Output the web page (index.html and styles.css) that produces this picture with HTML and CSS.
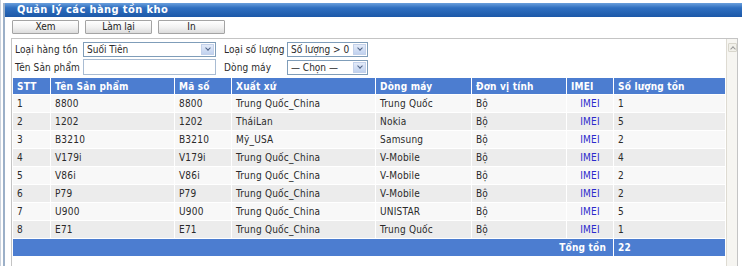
FILE: index.html
```html
<!DOCTYPE html>
<html lang="vi">
<head>
  <meta charset="UTF-8">
  <title>Quản lý các hàng tồn kho</title>
  <link rel="stylesheet" href="styles.css">
</head>
<body>

  <div class="frame">
    <div class="panel">
      <!-- Title bar -->
      <div class="panel-title">Quản lý các hàng tồn kho</div>

      <!-- Toolbar -->
      <div class="toolbar">
        <button class="btn">Xem</button>
        <button class="btn">Làm lại</button>
        <button class="btn">In</button>
      </div>

      <!-- Scroll box with filters and table -->
      <div class="scrollbox">
        <div class="scroll-content">
          <div class="filters">
            <label class="f-label">Loại hàng tồn</label>
            <div class="select wide"><span>Suối Tiên</span><i class="arrow"></i></div>
            <label class="f-label second">Loại số lượng</label>
            <div class="select narrow"><span>Số lượng &gt; 0</span><i class="arrow"></i></div>

            <label class="f-label">Tên Sản phẩm</label>
            <div class="textbox"></div>
            <label class="f-label second">Dòng máy</label>
            <div class="select narrow"><span>— Chọn —</span><i class="arrow"></i></div>
          </div>

          <table class="stock">
            <colgroup>
              <col style="width:37px">
              <col style="width:123px">
              <col style="width:56px">
              <col style="width:143px">
              <col style="width:95px">
              <col style="width:94px">
              <col style="width:46px">
              <col style="width:111px">
            </colgroup>
            <thead>
              <tr>
                <th>STT</th>
                <th>Tên Sản phẩm</th>
                <th>Mã số</th>
                <th>Xuất xứ</th>
                <th>Dòng máy</th>
                <th>Đơn vị tính</th>
                <th>IMEI</th>
                <th>Số lượng tồn</th>
              </tr>
            </thead>
            <tbody>
              <tr><td>1</td><td>8800</td><td>8800</td><td>Trung Quốc_China</td><td>Trung Quốc</td><td>Bộ</td><td class="c"><a href="#">IMEI</a></td><td>1</td></tr>
              <tr><td>2</td><td>1202</td><td>1202</td><td>TháiLan</td><td>Nokia</td><td>Bộ</td><td class="c"><a href="#">IMEI</a></td><td>5</td></tr>
              <tr><td>3</td><td>B3210</td><td>B3210</td><td>Mỹ_USA</td><td>Samsung</td><td>Bộ</td><td class="c"><a href="#">IMEI</a></td><td>2</td></tr>
              <tr><td>4</td><td>V179i</td><td>V179i</td><td>Trung Quốc_China</td><td>V-Mobile</td><td>Bộ</td><td class="c"><a href="#">IMEI</a></td><td>4</td></tr>
              <tr><td>5</td><td>V86i</td><td>V86i</td><td>Trung Quốc_China</td><td>V-Mobile</td><td>Bộ</td><td class="c"><a href="#">IMEI</a></td><td>2</td></tr>
              <tr><td>6</td><td>P79</td><td>P79</td><td>Trung Quốc_China</td><td>V-Mobile</td><td>Bộ</td><td class="c"><a href="#">IMEI</a></td><td>2</td></tr>
              <tr><td>7</td><td>U900</td><td>U900</td><td>Trung Quốc_China</td><td>UNISTAR</td><td>Bộ</td><td class="c"><a href="#">IMEI</a></td><td>5</td></tr>
              <tr><td>8</td><td>E71</td><td>E71</td><td>Trung Quốc_China</td><td>Trung Quốc</td><td>Bộ</td><td class="c"><a href="#">IMEI</a></td><td>1</td></tr>
            </tbody>
            <tfoot>
              <tr>
                <td colspan="7" class="total-label">Tổng tồn</td>
                <td class="total">22</td>
              </tr>
            </tfoot>
          </table>
        </div>

        <!-- Scrollbar -->
        <div class="scrollbar"><span class="scroll-up"></span></div>
      </div>
    </div>
  </div>

</body>
</html>
```

FILE: styles.css
```css
* {
  box-sizing: border-box;
  margin: 0;
  padding: 0;
}

body {
  font-family: "DejaVu Sans Condensed", "DejaVu Sans", sans-serif;
  font-stretch: condensed;
  font-size: 10px;
  color: #2a2a2a;
  background: #fff;
  overflow: hidden;
}

.frame {
  height: 266px;
  padding-top: 3px;
  border-left: 1px solid #c9d1dc;
}

.panel {
  height: 100%;
  margin-left: 2px;
  border-left: 2px solid #9cb0c8;
}

/* Title bar */
.panel-title {
  height: 14px;
  line-height: 14px;
  padding-left: 12px;
  color: #fff;
  font-weight: bold;
  font-size: 11px;
  letter-spacing: 0.4px;
  background: linear-gradient(to bottom, #6a9fdc 0%, #2f6fc0 35%, #1c58a8 100%);
}

/* Toolbar */
.toolbar {
  display: flex;
  gap: 6px;
  padding: 3px 0 0 7px;
}

.btn {
  width: 67px;
  height: 14px;
  font-family: inherit;
  font-stretch: condensed;
  font-size: 10px;
  line-height: 12px;
  color: #222;
  border: 1px solid #a4a4a4;
  border-radius: 1px;
  background: linear-gradient(to bottom, #ffffff 0%, #f1f1f1 55%, #dcdcdc 100%);
}

/* Scroll box */
.scrollbox {
  display: flex;
  margin: 4px 4px 0 6px;
  height: 240px;
  border: 1px solid #c4c4c4;
  border-bottom: none;
}

.scroll-content {
  flex: 1;
  padding: 3px 0 0 0;
}

.scrollbar {
  width: 12px;
  border-left: 1px solid #dedbd2;
  background: #f6f5f1;
  padding: 4px 0 0 1px;
}

.scroll-up {
  display: block;
  width: 9px;
  height: 9px;
  border: 1px solid #d8d6cc;
  border-radius: 1px;
  background: #f1f0ea;
  position: relative;
}

.scroll-up::after {
  content: "";
  position: absolute;
  left: 2px;
  top: 3px;
  width: 3px;
  height: 3px;
  border-left: 1px solid #9a9a9a;
  border-top: 1px solid #9a9a9a;
  transform: rotate(45deg);
}

/* Filters */
.filters {
  display: grid;
  grid-template-columns: 68px 133px 71px 81px;
  row-gap: 2px;
  align-items: center;
  padding-left: 3px;
}

.f-label {
  font-size: 10px;
  letter-spacing: 0.1px;
  white-space: nowrap;
}

.f-label.second {
  padding-left: 8px;
}

.select {
  display: flex;
  align-items: center;
  justify-content: space-between;
  height: 15px;
  border: 1px solid #7f9db9;
  background: #fff;
  padding: 0 1px 0 3px;
  font-size: 10px;
}

.arrow {
  display: block;
  width: 13px;
  height: 11px;
  background: linear-gradient(to bottom, #e3ebf9, #c1d2ef);
  border: 1px solid #c3d1ea;
  position: relative;
}

.arrow::after {
  content: "";
  position: absolute;
  left: 4px;
  top: 1px;
  width: 3px;
  height: 3px;
  border-right: 1.5px solid #4d6185;
  border-bottom: 1.5px solid #4d6185;
  transform: rotate(45deg);
}

.textbox {
  height: 16px;
  border: 1px solid #a9bcd3;
  background: #fff;
}

/* Table */
.stock {
  margin-top: 2px;
  width: 714px;
  table-layout: fixed;
  border-collapse: separate;
  border-spacing: 1px;
  font-size: 10px;
  letter-spacing: 0.2px;
}

.stock th {
  height: 16px;
  padding: 0 4px;
  text-align: left;
  color: #fff;
  font-weight: bold;
  background: #4c7dd0;
  white-space: nowrap;
}

.stock td {
  height: 17px;
  padding: 0 4px;
  white-space: nowrap;
}

.stock tbody tr:nth-child(odd) td {
  background: #f8f8f8;
}

.stock tbody tr:nth-child(even) td {
  background: #ececec;
}

.stock td.c {
  text-align: center;
}

.stock a {
  color: #2b2bcc;
  text-decoration: none;
}

.stock tfoot td {
  background: #4c7dd0;
  color: #fff;
  font-weight: bold;
}

.stock .total-label {
  text-align: right;
  padding-right: 7px;
}
```
